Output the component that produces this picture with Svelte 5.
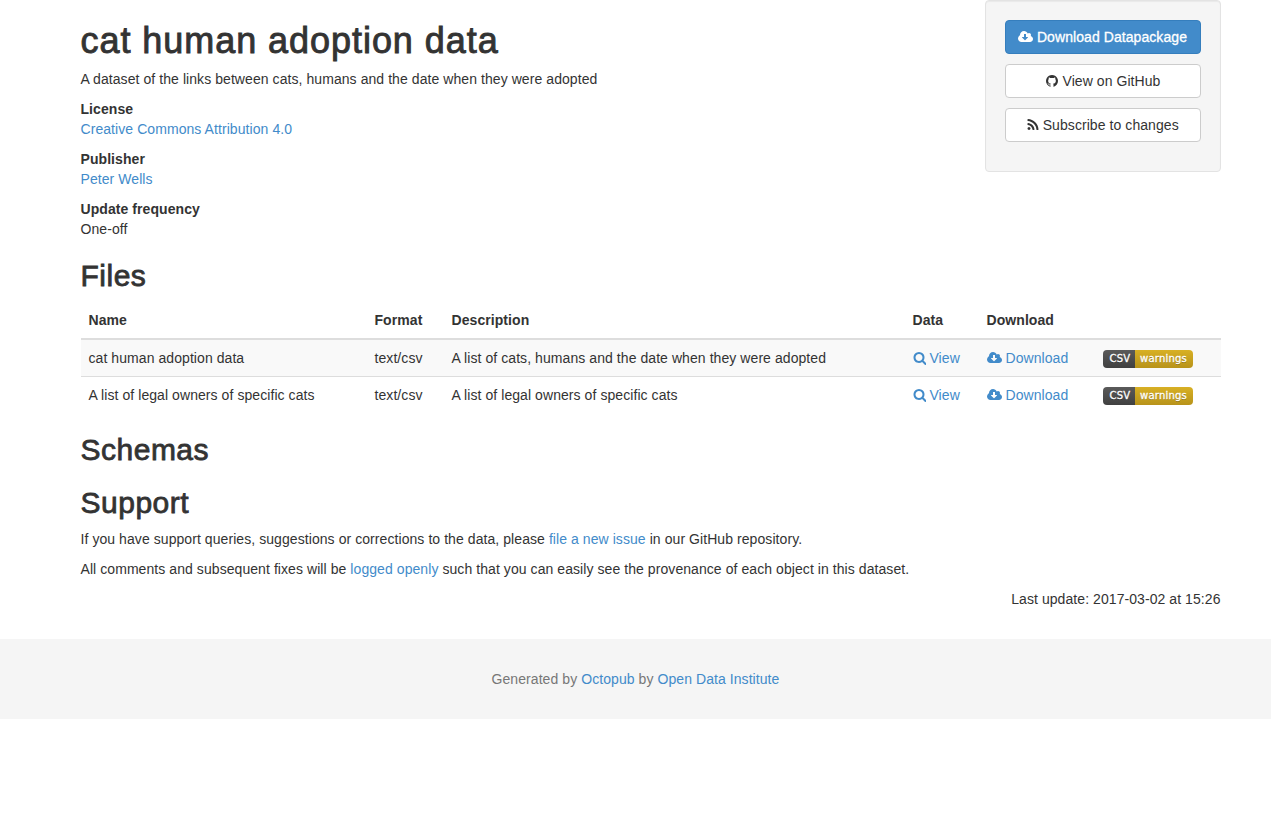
<script>
  const cloudPath = "M1280 928q0-14-9-23t-23-9h-224v-352q0-13-9.500-22.500t-22.500-9.500h-192q-13 0-22.500 9.500t-9.500 22.500v352h-224q-13 0-22.500 9.500t-9.500 22.500q0 14 9 23l352 352q9 9 23 9t23-9l351-351q10-12 10-24zm640 224q0 159-112.500 271.500t-271.500 112.500h-1088q-185 0-316.500-131.500t-131.500-316.500q0-130 70-240t188-165q-2-30-2-43 0-212 150-362t362-150q156 0 285.500 87t188.500 231q71-62 166-62 106 0 181 75t75 181q0 76-41 138 130 31 213.500 135.500t83.500 238.500z";
  const searchPath = "M1216 832q0-185-131.500-316.500t-316.500-131.500-316.500 131.500-131.500 316.500 131.500 316.500 316.500 131.500 316.500-131.500 131.500-316.500zm512 832q0 52-38 90t-90 38q-54 0-90-38l-343-342q-179 124-399 124-143 0-273.500-55.500t-225-150-150-225-55.500-273.500 55.500-273.500 150-225 225-150 273.500-55.500 273.500 55.500 225 150 150 225 55.500 273.500q0 220-124 399l343 343q37 37 37 90z";
  const rssPath = "M576 1344q0 80-56 136t-136 56-136-56-56-136 56-136 136-56 136 56 56 136zm512 123q2 28-17 48-18 21-47 21h-135q-25 0-43-16.500t-20-41.500q-22-229-184.500-391.500t-391.500-184.500q-25-2-41.500-20t-16.500-43v-135q0-29 21-47 17-17 43-17h5q160 13 306 80.500t259 181.500q114 113 181.500 259t80.500 306zm512 2q2 27-18 47-18 20-46 20h-143q-26 0-44.500-17.500t-19.500-42.500q-12-215-101-408.500t-231.500-336-336-231.500-408.500-102q-25-1-42.500-19.500t-17.500-43.500v-143q0-28 20-46 18-18 44-18h3q262 13 501.500 120t425.500 294q187 186 294 425.500t120 501.500z";
  const ghPath = "M896 128q209 0 385.500 103t279.500 279.500 103 385.500q0 251-146.500 451.500t-378.500 277.500q-27 5-40-7t-13-30q0-3 .5-76.500t.5-134.500q0-97-52-142 57-6 102.500-18t94-39 81-66.500 53-105 20.500-150.500q0-119-79-206 37-91-8-204-28-9-81 11t-92 44l-38 24q-93-26-192-26t-192 26q-16-11-42.500-27t-83.500-38.500-85-13.500q-45 113-8 204-79 87-79 206 0 85 20.500 150t52.500 105 80.500 67 94 39 102.500 18q-39 36-49 103-21 10-45 15t-57 5-65.500-21.500-55.500-62.500q-19-32-48.500-52t-49.500-24l-20-3q-21 0-29 4.500t-5 11.500 9 14 13 12l7 5q22 10 43.500 38t31.500 51l10 23q13 38 44 63t67 32 69.500 7 55.500-3.500l23-4q0 38 .5 88.500t.5 54.500q0 18-13 30t-40 7q-232-77-378.500-277.500t-146.500-451.500q0-209 103-385.500t279.500-279.500 385.500-103z";

  const files = [
    { name: "cat human adoption data", desc: "A list of cats, humans and the date when they were adopted" },
    { name: "A list of legal owners of specific cats", desc: "A list of legal owners of specific cats" }
  ];
</script>

{#snippet icon(d, w)}
  <svg class="fa" viewBox="0 0 {w} 1792" style="width:{(w / 1792) * 14}px" aria-hidden="true"><path {d} fill="currentColor" /></svg>
{/snippet}

<div class="page">
  <aside class="well">
    <a class="btn primary" href="#dl">{@render icon(cloudPath, 1920)} Download Datapackage</a>
    <a class="btn" href="#gh">{@render icon(ghPath, 1792)} View on GitHub</a>
    <a class="btn" href="#rss">{@render icon(rssPath, 1600)} Subscribe to changes</a>
  </aside>

  <h1>cat human adoption data</h1>
  <p>A dataset of the links between cats, humans and the date when they were adopted</p>
  <p><strong>License</strong><br /><a href="#l">Creative Commons Attribution 4.0</a></p>
  <p><strong>Publisher</strong><br /><a href="#p">Peter Wells</a></p>
  <p><strong>Update frequency</strong><br />One-off</p>

  <h2>Files</h2>
  <table>
    <colgroup>
      <col class="c-name" /><col class="c-format" /><col class="c-desc" /><col class="c-data" /><col class="c-dl" /><col />
    </colgroup>
    <thead>
      <tr><th>Name</th><th>Format</th><th>Description</th><th>Data</th><th>Download</th><th></th></tr>
    </thead>
    <tbody>
      {#each files as f}
        <tr>
          <td>{f.name}</td>
          <td>text/csv</td>
          <td>{f.desc}</td>
          <td><a href="#v">{@render icon(searchPath, 1664)} View</a></td>
          <td><a href="#d">{@render icon(cloudPath, 1920)} Download</a></td>
          <td>
            <span class="badge"><span class="b-l">CSV</span><span class="b-r">warnings</span></span>
          </td>
        </tr>
      {/each}
    </tbody>
  </table>

  <h2>Schemas</h2>
  <h2>Support</h2>
  <p>If you have support queries, suggestions or corrections to the data, please <a href="#i">file a new issue</a> in our GitHub repository.</p>
  <p>All comments and subsequent fixes will be <a href="#o">logged openly</a> such that you can easily see the provenance of each object in this dataset.</p>
  <p class="updated">Last update: 2017-03-02 at 15:26</p>
</div>

<footer>
  <p>Generated by <a href="#oc">Octopub</a> by <a href="#odi">Open Data Institute</a></p>
</footer>

<style>
  :global(body) {
    margin: 0;
    font-family: "Liberation Sans", Arial, sans-serif;
    font-size: 14px;
    line-height: 20px;
    letter-spacing: 0.07px;
    color: #333;
    background: #fff;
  }
  .page {
    padding: 0 50.5px 0 80.5px;
    display: flow-root;
  }
  a {
    color: #428bca;
    text-decoration: none;
  }
  h1, h2 {
    font-weight: 400;
    margin: 20px 0 10px;
  }
  h1 {
    font-size: 36px;
    line-height: 39px;
    letter-spacing: 0.95px;
    -webkit-text-stroke: 0.9px #333;
    margin: 21px 0 9px;
  }
  h2 {
    font-size: 30px;
    line-height: 33px;
    letter-spacing: 0.5px;
    -webkit-text-stroke: 0.8px #333;
  }
  p { margin: 0 0 10px; }
  strong { font-weight: 700; }
  .fa {
    display: inline-block;
    height: 14px;
    vertical-align: -2px;
  }
  .well {
    float: right;
    box-sizing: border-box;
    width: 236px;
    height: 172px;
    padding: 19px;
    background: #f5f5f5;
    border: 1px solid #e3e3e3;
    border-radius: 4px;
    box-shadow: inset 0 1px 1px rgba(0, 0, 0, 0.05);
    display: flex;
    flex-direction: column;
    gap: 10px;
  }
  .btn {
    display: block;
    box-sizing: border-box;
    height: 34px;
    padding: 6px 12px;
    text-align: center;
    color: #333;
    background: #fff;
    border: 1px solid #ccc;
    border-radius: 4px;
  }
  .btn.primary {
    color: #fff;
    background: #428bca;
    border-color: #357ebd;
    -webkit-text-stroke: 0.3px #fff;
  }
  table {
    width: 100%;
    table-layout: fixed;
    border-collapse: separate;
    border-spacing: 0;
    margin-bottom: 20px;
  }
  .c-name { width: 286px; }
  .c-format { width: 77px; }
  .c-desc { width: 461px; }
  .c-data { width: 74px; }
  .c-dl { width: 116px; }
  th, td {
    padding: 8px;
    text-align: left;
    vertical-align: top;
    line-height: 20px;
  }
  th {
    font-weight: 700;
    border-bottom: 2px solid #ddd;
  }
  td { border-top: 1px solid #ddd; }
  tbody tr:first-child td { border-top: 0; }
  tbody tr:nth-child(odd) td { background: #f9f9f9; }
  .badge {
    display: flex;
    height: 18px;
    width: 90px;
    margin-top: 2px;
    border-radius: 4px;
    overflow: hidden;
    font-family: "DejaVu Sans", Verdana, sans-serif;
    font-size: 10px;
    line-height: 18px;
    letter-spacing: 0.2px;
    color: #fff;
    text-shadow: 0 1px 0 rgba(1, 1, 1, 0.3);
    -webkit-text-stroke: 0.3px #fff;
  }
  .b-l, .b-r { text-align: center; box-sizing: border-box; }
  .b-l {
    width: 32px;
    padding-left: 3px;
    background: linear-gradient(#5a5a5a, #404040);
  }
  .b-r {
    width: 58px;
    background: linear-gradient(#d8b024, #b8931a);
  }
  .updated {
    text-align: right;
    margin-bottom: 0;
  }
  footer {
    margin-top: 30px;
    height: 80px;
    background: #f5f5f5;
    color: #777;
    text-align: center;
    display: flex;
    align-items: center;
    justify-content: center;
  }
  footer p { margin: 0; }
</style>
